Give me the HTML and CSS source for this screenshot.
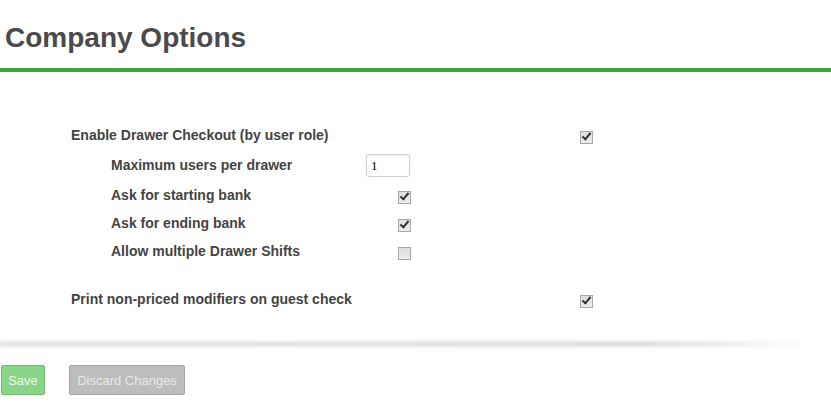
FILE: index.html
```html
<html>
    <head>
        <title>Company Options</title>
        <link rel="stylesheet" href="styles.css">
    </head>
    <body>
        <h1 class="title">Company Options</h1>

        <div class="options">
            <div class="row">
                <span class="label">Enable Drawer Checkout (by user role)</span>
                <span class="check checked"></span>
            </div>
            <div class="sub">
                <div class="row tall">
                    <span class="label">Maximum users per drawer</span>
                    <input type="text" class="num" value="1" />
                </div>
                <div class="row">
                    <span class="label">Ask for starting bank</span>
                    <span class="check checked"></span>
                </div>
                <div class="row">
                    <span class="label">Ask for ending bank</span>
                    <span class="check checked"></span>
                </div>
                <div class="row">
                    <span class="label">Allow multiple Drawer Shifts</span>
                    <span class="check"></span>
                </div>
            </div>
            <div class="row gap">
                <span class="label">Print non-priced modifiers on guest check</span>
                <span class="check checked"></span>
            </div>
        </div>

        <div class="shadow"></div>

        <div class="buttons">
            <button type="button" class="btn save">Save</button>
            <button type="button" class="btn discard">Discard Changes</button>
        </div>
    </body>
</html>
```

FILE: styles.css
```css
body {
    margin: 0;
    font-family: "Liberation Sans", Arial, sans-serif;
    color: #444;
    background: white;
}

.title {
    margin: 0;
    padding: 22px 0 0 5px;
    height: 46px;
    font-size: 28px;
    font-weight: bold;
    color: #4a4a4c;
    border-bottom: 4px solid #3aaa35;
}

.options {
    padding: 49px 0 0 71px;
}

.row {
    display: flex;
    align-items: center;
    height: 28px;
}

.row.tall {
    height: 32px;
}

.label {
    font-size: 14px;
    font-weight: bold;
    color: #444;
}

.options > .row .label {
    width: 509px;
}

.sub {
    padding-left: 40px;
}

.sub .row .label {
    width: 255px;
}

.gap {
    margin-top: 20px;
}

.check {
    display: inline-block;
    box-sizing: border-box;
    width: 13px;
    height: 13px;
    margin-top: 5px;
    border: 1px solid #a8a8a8;
    background: linear-gradient(#dedede, #ececec);
    position: relative;
}

.check.checked::after {
    content: "";
    position: absolute;
    left: 3px;
    top: -1px;
    width: 3px;
    height: 7px;
    border: solid #333;
    border-width: 0 2.5px 2.5px 0;
    transform: rotate(40deg);
}

.sub .check {
    margin-left: 32px;
}

.num {
    box-sizing: border-box;
    width: 44px;
    height: 23px;
    border: 1px solid #d0d0d0;
    border-radius: 3px;
    padding: 3px 4px 1px;
    font-family: "Liberation Serif", serif;
    font-size: 13px;
    color: #000;
    box-shadow: inset 0 1px 1px #eee;
}

.shadow {
    margin: 28px 20px 0 0;
    height: 6px;
    background: linear-gradient(to right, #e4e4e4 0%, #e0e0e0 80%, rgba(255,255,255,0) 100%);
    filter: blur(1.5px);
}

.buttons {
    padding: 18px 0 0 1px;
    display: flex;
    gap: 24px;
}

.btn {
    height: 30px;
    font-family: "Liberation Sans", Arial, sans-serif;
    font-size: 13px;
    border-radius: 2px;
    padding: 0 6px;
    color: #eef5ee;
}

.save {
    width: 44px;
    background: #8ad48a;
    border: 1px solid #6cbd6c;
}

.discard {
    width: 116px;
    background: #bdbdbd;
    border: 1px solid #a5a5a5;
    color: #e8e8e8;
}
```
